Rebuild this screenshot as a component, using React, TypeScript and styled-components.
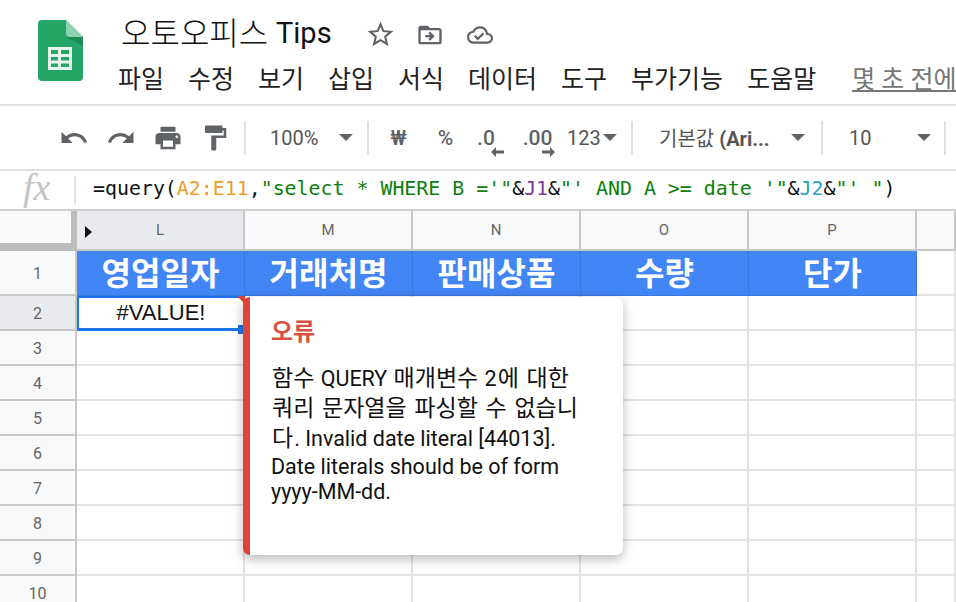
import React from "react"
import styled, { createGlobalStyle } from "styled-components"

const GlobalStyle = createGlobalStyle`
  html, body {
    margin: 0;
    padding: 0;
    background: #fff;
  }
  body {
    font-family: Roboto, "Noto Sans CJK KR", sans-serif;
  }
`

const Page = styled.div`
  width: 956px;
  height: 602px;
  overflow: hidden;
  display: flex;
  flex-direction: column;
`

const Header = styled.header`
  height: 104px;
  flex: none;
  display: flex;
  border-bottom: 2px solid #e0e0e0;
  box-sizing: content-box;
`

const LogoBox = styled.div`
  flex: none;
  width: 118px;
  padding: 20px 0 0 38px;
  box-sizing: border-box;
`

const HeaderMain = styled.div`
  flex: 1;
  min-width: 0;
  display: flex;
  flex-direction: column;
`

const TitleRow = styled.div`
  height: 62px;
  padding: 0 0 0 3px;
  display: flex;
  align-items: center;
`

const Title = styled.div`
  font-size: 32px;
  color: #111;
  width: 234px;
  white-space: nowrap;
  font-weight: 300;
  span {
    font-size: 29px;
    font-weight: 400;
    vertical-align: 2px;
  }
`

const TitleIcon = styled.svg<{ $size: number }>`
  width: ${(p) => p.$size}px;
  height: ${(p) => p.$size}px;
  fill: #5f6368;
`

const TitleIconBox = styled.div`
  flex: none;
  width: 50px;
  padding-top: 7px;
  display: flex;
  justify-content: center;
`

const MenuRow = styled.nav`
  display: flex;
  white-space: nowrap;
  font-size: 25px;
  color: #222;
  gap: 24px;
  line-height: 36px;
`

const LastEdit = styled.span`
  margin-left: 12px;
  color: #777;
  text-decoration: underline;
`

const Toolbar = styled.div`
  height: 63px;
  flex: none;
  display: flex;
  align-items: center;
  padding-left: 50px;
  border-bottom: 2px solid #e0e0e0;
  color: #5f6368;
`

const ToolIcon = styled.button`
  flex: none;
  width: 47px;
  height: 34px;
  padding: 0;
  border: 0;
  background: none;
  color: #5f6368;
  display: flex;
  align-items: center;
  justify-content: center;
  font-family: Roboto, sans-serif;
  font-size: 21px;
  font-weight: 500;
  svg {
    width: 30px;
    height: 30px;
    fill: currentColor;
  }
`

const Sep = styled.div<{ $l?: number; $r?: number }>`
  flex: none;
  width: 2px;
  height: 34px;
  background: #e0e0e0;
  margin: 0 ${(p) => p.$r ?? 0}px 0 ${(p) => p.$l ?? 0}px;
`

const Select = styled.div<{ $w: number; $ml?: number }>`
  flex: none;
  width: ${(p) => p.$w}px;
  margin-left: ${(p) => p.$ml ?? 0}px;
  display: flex;
  align-items: center;
  justify-content: space-between;
  font-size: 20px;
  color: #555;
  white-space: nowrap;
`

const Caret = styled.span`
  flex: none;
  width: 0;
  height: 0;
  border-left: 7px solid transparent;
  border-right: 7px solid transparent;
  border-top: 7px solid #5f6368;
`

const Decimal = styled.span<{ $shift: number; $over: number }>`
  display: flex;
  flex-direction: column;
  align-items: flex-end;
  line-height: 22px;
  margin: 9px ${(p) => p.$shift}px 0 0;
  svg {
    width: 14px;
    height: 12px;
    margin: -3px ${(p) => -p.$over}px 0 0;
  }
`

const FormulaBar = styled.div`
  height: 38px;
  flex: none;
  display: flex;
  align-items: center;
  border-bottom: 2px solid #d0d0d0;
`

const Fx = styled.span`
  flex: none;
  width: 76px;
  box-sizing: border-box;
  padding-left: 23px;
  font-family: "Liberation Serif", serif;
  font-style: italic;
  font-size: 38px;
  color: #c4c4c4;
  border-right: 2px solid #e0e0e0;
  height: 28px;
  line-height: 22px;
`

const Formula = styled.code`
  margin: 0 0 4px 17px;
  font-family: "DejaVu Sans Mono", monospace;
  font-size: 19.9px;
  color: #111;
  white-space: pre;
`

const Tok = styled.span<{ $c: string }>`
  color: ${(p) => p.$c};
`

const Sheet = styled.div`
  position: relative;
  flex: 1;
  display: grid;
  grid-template-columns: 77px repeat(5, 168px) 1fr;
  grid-template-rows: 40px 45px repeat(9, 35px);
  overflow: hidden;
`

const Corner = styled.div`
  background: #f8f9fa;
  border-right: 6px solid #bdbdbd;
  border-bottom: 8px solid #bdbdbd;
`

const ColHead = styled.div<{ $active?: boolean }>`
  position: relative;
  display: flex;
  align-items: center;
  justify-content: center;
  background: ${(p) => (p.$active ? "#e8eaed" : "#f8f9fa")};
  border-right: 2px solid #c8c8c8;
  border-bottom: 2px solid #c8c8c8;
  font-size: 15px;
  color: #666;
`

const FreezeMark = styled.span`
  position: absolute;
  left: 8px;
  top: 15px;
  border-top: 6px solid transparent;
  border-bottom: 6px solid transparent;
  border-left: 7px solid #111;
`

const RowHead = styled.div<{ $active?: boolean }>`
  display: flex;
  align-items: center;
  justify-content: center;
  padding-top: 2px;
  background: ${(p) => (p.$active ? "#e8eaed" : "#f8f9fa")};
  border-right: 2px solid #c8c8c8;
  border-bottom: 2px solid #c8c8c8;
  font-size: 16px;
  color: #666;
`

const HeadCell = styled.div`
  display: flex;
  align-items: center;
  justify-content: center;
  padding-bottom: 4px;
  background: #4285f4;
  border-right: 1px solid #3a78dc;
  border-bottom: 1px solid #3a78dc;
  color: #fff;
  font-size: 32px;
  font-weight: 700;
`

const Cell = styled.div`
  border-right: 2px solid #e2e3e3;
  border-bottom: 2px solid #e2e3e3;
`

const SelectedCell = styled.div`
  position: relative;
  display: flex;
  align-items: center;
  justify-content: center;
  border: 2px solid #1a73e8;
  border-bottom-width: 3px;
  font-family: "Liberation Sans", sans-serif;
  font-size: 22px;
  color: #111;
`

const ErrorMark = styled.span`
  position: absolute;
  right: -2px;
  top: -2px;
  border-top: 8px solid #d9453a;
  border-left: 8px solid transparent;
`

const Handle = styled.span`
  position: absolute;
  right: -2px;
  bottom: -6px;
  width: 7px;
  height: 9px;
  background: #1a73e8;
`

const ErrorPopup = styled.div`
  position: absolute;
  left: 243px;
  top: 86px;
  width: 380px;
  height: 258px;
  box-sizing: border-box;
  padding: 15px 40px 0 21px;
  background: #fff;
  border-left: 7px solid #e34335;
  border-radius: 7px;
  box-shadow: 0 4px 12px rgba(0, 0, 0, 0.28);
`

const ErrorTitle = styled.div`
  font-size: 24px;
  font-weight: 700;
  color: #d9503f;
  margin-bottom: 17px;
`

const ErrorLine = styled.div`
  font-size: 21.5px;
  color: #111;
  white-space: pre;
`

const Ko = styled.span`
  font-size: 23px;
  line-height: 30px;
  margin: 0 1px;
  word-spacing: 2px;
`

const SheetsLogo = () => (
  <svg width="45" height="61" viewBox="0 0 45 61">
    <path d="M4 0h24l17 17v40a4 4 0 0 1-4 4H4a4 4 0 0 1-4-4V4a4 4 0 0 1 4-4z" fill="#23a566" />
    <path d="M28 17h17v9z" fill="#1c8b56" />
    <path d="M28 0l17 17H32a4 4 0 0 1-4-4z" fill="#8ed1b1" />
    <path
      d="M10 27h24v23H10zm3 3v4h7v-4zm10 0v4h8v-4zm-10 7v3.500h7V37zm10 0v3.500h8V37zm-10 6.500V47h7v-3.500zm10 0V47h8v-3.500z"
      fill="#e8f5ee"
      fillRule="evenodd"
    />
  </svg>
)

const columns = ["M", "N", "O", "P"]
const titles = ["거래처명", "판매상품", "수량", "단가"]
const menus = ["파일", "수정", "보기", "삽입", "서식", "데이터", "도구", "부가기능", "도움말"]

const App = () => {
  return (
    <Page>
      <GlobalStyle />
      <Header>
        <LogoBox>
          <SheetsLogo />
        </LogoBox>
        <HeaderMain>
          <TitleRow>
            <Title>
              오토오피스 <span>Tips</span>
            </Title>
            <TitleIconBox>
              <TitleIcon $size={31} viewBox="0 0 24 24">
                <path d="M22 9.240l-7.190-.620L12 2 9.190 8.630 2 9.240l5.460 4.730L5.820 21 12 17.270 18.180 21l-1.630-7.030L22 9.240zM12 15.400l-3.760 2.270 1-4.280-3.320-2.880 4.380-.380L12 6.100l1.710 4.040 4.380.380-3.320 2.880 1 4.280L12 15.400z" />
              </TitleIcon>
            </TitleIconBox>
            <TitleIconBox>
              <TitleIcon $size={28} viewBox="0 0 24 24">
                <path d="M20 6h-8l-2-2H4c-1.100 0-2 .9-2 2v12c0 1.100.9 2 2 2h16c1.100 0 2-.9 2-2V8c0-1.100-.9-2-2-2zm0 12H4V8h16v10zm-8-9l-1.400 1.400 1.600 1.600H8v2h4.200l-1.600 1.600L12 17l4-4-4-4z" />
              </TitleIcon>
            </TitleIconBox>
            <TitleIconBox>
              <TitleIcon $size={26} viewBox="0 0 24 24">
                <path d="M19.350 10.040C18.670 6.590 15.640 4 12 4 9.110 4 6.600 5.640 5.350 8.040 2.340 8.360 0 10.910 0 14c0 3.310 2.690 6 6 6h13c2.760 0 5-2.240 5-5 0-2.640-2.050-4.780-4.650-4.960zM19 18H6c-2.210 0-4-1.790-4-4 0-2.050 1.530-3.760 3.560-3.970l1.070-.110.500-.950C8.080 7.140 9.940 6 12 6c2.620 0 4.880 1.860 5.390 4.430l.3 1.500 1.530.110c1.560.1 2.780 1.410 2.780 2.960 0 1.650-1.350 3-3 3zm-9-3.820l-2.090-2.090L6.500 13.500 10 17l6.010-6.010-1.410-1.410z" />
              </TitleIcon>
            </TitleIconBox>
          </TitleRow>
          <MenuRow>
            {menus.map((m) => (
              <span key={m}>{m}</span>
            ))}
            <LastEdit>몇 초 전에</LastEdit>
          </MenuRow>
        </HeaderMain>
      </Header>

      <Toolbar>
        <ToolIcon>
          <svg viewBox="0 0 24 24">
            <path d="M12.500 8c-2.650 0-5.050.99-6.900 2.600L2 7v9h9l-3.620-3.620c1.390-1.160 3.160-1.880 5.120-1.880 3.540 0 6.550 2.310 7.600 5.500l2.370-.78C21.080 11.030 17.150 8 12.500 8z" />
          </svg>
        </ToolIcon>
        <ToolIcon>
          <svg viewBox="0 0 24 24">
            <path d="M18.400 10.600C16.550 8.990 14.150 8 11.500 8c-4.650 0-8.580 3.030-9.960 7.220L3.900 16c1.050-3.190 4.050-5.500 7.600-5.500 1.950 0 3.730.72 5.120 1.880L13 16h9V7l-3.600 3.600z" />
          </svg>
        </ToolIcon>
        <ToolIcon>
          <svg viewBox="0 0 24 24">
            <path d="M19 8H5c-1.660 0-3 1.340-3 3v6h4v4h12v-4h4v-6c0-1.660-1.340-3-3-3zm-3 11H8v-5h8v5zm3-7c-.55 0-1-.45-1-1s.45-1 1-1 1 .45 1 1-.45 1-1 1zm-1-9H6v4h12V3z" />
          </svg>
        </ToolIcon>
        <ToolIcon>
          <svg viewBox="0 0 24 24">
            <path d="M18 4V3c0-.55-.45-1-1-1H5c-.55 0-1 .45-1 1v4c0 .55.45 1 1 1h12c.55 0 1-.45 1-1V6h1v4H9v11c0 .55.45 1 1 1h2c.55 0 1-.45 1-1v-9h8V4h-3z" />
          </svg>
        </ToolIcon>
        <Sep $l={6} $r={24} />
        <Select $w={83}>
          100%
          <Caret />
        </Select>
        <Sep $l={14} $r={6} />
        <ToolIcon>₩</ToolIcon>
        <ToolIcon>%</ToolIcon>
        <ToolIcon>
          <Decimal $shift={13} $over={10}>
            .0
            <svg viewBox="0 0 14 12">
              <path d="M13 4.500H5V1L0 6l5 5V7.500h8z" fill="#5f6368" />
            </svg>
          </Decimal>
        </ToolIcon>
        <ToolIcon>
          <Decimal $shift={4} $over={3}>
            .00
            <svg viewBox="0 0 14 12">
              <path d="M1 4.500h8V1l5 5-5 5V7.500H1z" fill="#5f6368" />
            </svg>
          </Decimal>
        </ToolIcon>
        <Select $w={50} $ml={4}>
          123
          <Caret />
        </Select>
        <Sep $l={14} $r={26} />
        <Select $w={146}>
          <span>
            기본값 <b>(Ari...</b>
          </span>
          <Caret />
        </Select>
        <Sep $l={16} $r={26} />
        <Select $w={82}>
          10
          <Caret />
        </Select>
        <Sep $l={13} />
      </Toolbar>

      <FormulaBar>
        <Fx>fx</Fx>
        <Formula>
          =query(<Tok $c="#ee9d2c">A2:E11</Tok>,<Tok $c="#0b800b">"select * WHERE B ='"</Tok>&amp;
          <Tok $c="#7b3a96">J1</Tok>&amp;<Tok $c="#0b800b">"' AND A &gt;= date '"</Tok>&amp;
          <Tok $c="#2ea3c9">J2</Tok>&amp;<Tok $c="#0b800b">"' "</Tok>)
        </Formula>
      </FormulaBar>

      <Sheet>
        <Corner />
        <ColHead $active>
          <FreezeMark />L
        </ColHead>
        {columns.map((c) => (
          <ColHead key={c}>{c}</ColHead>
        ))}
        <ColHead />

        <RowHead>1</RowHead>
        <HeadCell>영업일자</HeadCell>
        {titles.map((t) => (
          <HeadCell key={t}>{t}</HeadCell>
        ))}
        <Cell />

        <RowHead $active>2</RowHead>
        <SelectedCell>
          #VALUE!
          <ErrorMark />
          <Handle />
        </SelectedCell>
        {[0, 1, 2, 3, 4].map((i) => (
          <Cell key={i} />
        ))}

        {[3, 4, 5, 6, 7, 8, 9, 10].map((r) => (
          <React.Fragment key={r}>
            <RowHead>{r}</RowHead>
            {[0, 1, 2, 3, 4, 5].map((i) => (
              <Cell key={i} />
            ))}
          </React.Fragment>
        ))}

        <ErrorPopup>
          <ErrorTitle>오류</ErrorTitle>
          <ErrorLine>
            <Ko>함수</Ko> QUERY <Ko>매개변수</Ko> 2<Ko>에 대한</Ko>
          </ErrorLine>
          <ErrorLine>
            <Ko>쿼리 문자열을 파싱할 수 없습니</Ko>
          </ErrorLine>
          <ErrorLine>
            <Ko>다</Ko>. Invalid date literal [44013].
          </ErrorLine>
          <ErrorLine>Date literals should be of form</ErrorLine>
          <ErrorLine>yyyy-MM-dd.</ErrorLine>
        </ErrorPopup>
      </Sheet>
    </Page>
  )
}

export default App
